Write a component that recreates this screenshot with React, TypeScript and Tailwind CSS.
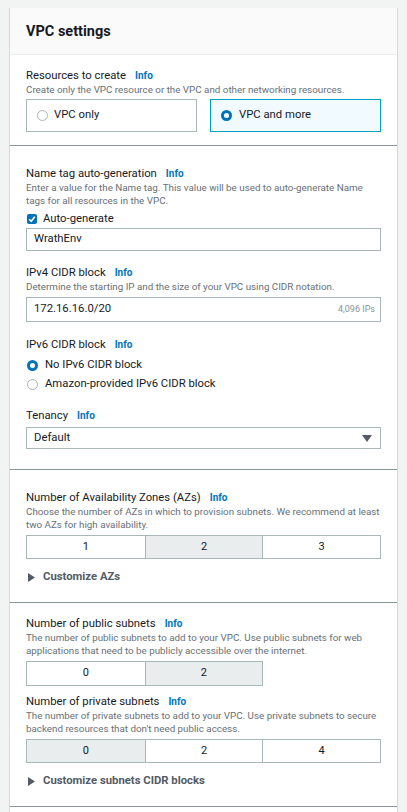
import React from "react";

const font = { fontFamily: "Roboto, 'Liberation Sans', sans-serif" };

function Label({ text, info = true }: { text: string; info?: boolean }) {
  return (
    <div className="flex items-center h-[16px] leading-[16px] pt-[1px]">
      <span className="text-[11.3px] text-[#16191f]">{text}</span>
      {info && <span className="ml-[9px] text-[10px] font-bold text-[#0073bb]">Info</span>}
    </div>
  );
}

function Desc({ children }: { children: React.ReactNode }) {
  return <p className="text-[9.8px] leading-[13px] text-[#687078]">{children}</p>;
}

function Radio({ checked }: { checked?: boolean }) {
  return checked ? (
    <span className="w-[11px] h-[11px] rounded-full bg-[#0073bb] flex items-center justify-center shrink-0">
      <span className="w-[5px] h-[5px] rounded-full bg-white" />
    </span>
  ) : (
    <span className="w-[11px] h-[11px] rounded-full border border-[#aab7b8] bg-white shrink-0" />
  );
}

function Segmented({ items, selected, cols }: { items: string[]; selected: number; cols: 2 | 3 }) {
  return (
    <div
      className={
        "grid border border-[#aab7b8] " +
        (cols === 3 ? "grid-cols-3 w-[355px]" : "grid-cols-2 w-[237px]")
      }
    >
      {items.map((it, i) => (
        <div
          key={it}
          className={
            "flex items-center justify-center text-[11px] text-[#16191f] " +
            (i > 0 ? "border-l border-[#aab7b8] " : "") +
            (i === selected ? "bg-[#eaeded]" : "bg-white")
          }
        >
          {it}
        </div>
      ))}
    </div>
  );
}

function Expand({ text }: { text: string }) {
  return (
    <div className="flex items-center h-[16px] gap-[8px] pl-[2px]">
      <svg width="7" height="9" viewBox="0 0 7 9">
        <path d="M0 0 L7 4.5 L0 9 Z" fill="#545b64" />
      </svg>
      <span className="text-[11.3px] font-bold text-[#545b64]">{text}</span>
    </div>
  );
}

export default function App() {
  return (
    <div className="min-h-screen bg-[#f2f3f3] pt-[8px] px-[9px]" style={font}>
      <div className="bg-white border-x border-[#d5dbdb]">
        {/* header */}
        <div className="h-[47px] bg-[#fafafa] border-b border-[#eaeded] px-4 pt-[2px] flex items-center">
          <h2 className="text-[14.5px] font-bold text-[#16191f]">VPC settings</h2>
        </div>

        {/* resources */}
        <div className="px-4 pt-[12px] pb-[13px] border-b border-[#879596]">
          <Label text="Resources to create" />
          <Desc>Create only the VPC resource or the VPC and other networking resources.</Desc>
          <div className="mt-[3px] grid grid-cols-2 gap-[13px]">
            <div className="h-[33px] border border-[#aab7b8] flex items-center pl-[10px] gap-[6px]">
              <Radio />
              <span className="text-[11.3px] text-[#16191f]">VPC only</span>
            </div>
            <div className="h-[33px] border border-[#00a1c9] bg-[#f1faff] flex items-center pl-[10px] gap-[7px]">
              <Radio checked />
              <span className="text-[11.3px] text-[#16191f]">VPC and more</span>
            </div>
          </div>
        </div>

        {/* name tag etc */}
        <div className="px-4 pt-[19px] pb-[20px] border-b border-[#879596]">
          <Label text="Name tag auto-generation" />
          <Desc>
            Enter a value for the Name tag. This value will be used to auto-generate Name tags for all
            resources in the VPC.
          </Desc>
          <div className="mt-[4px] h-[16px] flex items-center gap-[6px] pl-[1px]">
            <span className="w-[10px] h-[10px] rounded-[2px] bg-[#0073bb] flex items-center justify-center">
              <svg width="8" height="8" viewBox="0 0 8 8">
                <path d="M1.2 4.2 L3.2 6.2 L6.8 1.8" stroke="white" strokeWidth="1.6" fill="none" />
              </svg>
            </span>
            <span className="text-[11.3px] text-[#16191f]">Auto-generate</span>
          </div>
          <div className="mt-[1px] h-[23px] border border-[#aab7b8] flex items-center pl-[7px] text-[11.3px] text-[#16191f]">
            WrathEnv
          </div>

          <div className="mt-[13px]">
            <Label text="IPv4 CIDR block" />
            <Desc>Determine the starting IP and the size of your VPC using CIDR notation.</Desc>
            <div className="mt-[4px] h-[25px] border border-[#aab7b8] flex items-center justify-between pl-[7px] pr-[5px]">
              <span className="text-[11.3px] text-[#16191f]">172.16.16.0/20</span>
              <span className="text-[9px] text-[#879596]">4,096 IPs</span>
            </div>
          </div>

          <div className="mt-[14px]">
            <Label text="IPv6 CIDR block" />
            <div className="mt-[4px]">
              <div className="h-[19px] flex items-center gap-[7px] pl-[1px]">
                <Radio checked />
                <span className="text-[11.3px] text-[#16191f]">No IPv6 CIDR block</span>
              </div>
              <div className="h-[19px] flex items-center gap-[7px] pl-[1px]">
                <Radio />
                <span className="text-[11.3px] text-[#16191f]">Amazon-provided IPv6 CIDR block</span>
              </div>
            </div>
          </div>

          <div className="mt-[13px]">
            <Label text="Tenancy" />
            <div className="mt-[4px] h-[22px] border border-[#aab7b8] flex items-center justify-between pl-[7px] pr-[8px]">
              <span className="text-[11.3px] text-[#16191f]">Default</span>
              <svg width="10" height="7" viewBox="0 0 10 7">
                <path d="M0 0 L10 0 L5 7 Z" fill="#545b64" />
              </svg>
            </div>
          </div>
        </div>

        {/* AZs */}
        <div className="px-4 pt-[19px] pb-[17px] border-b border-[#879596]">
          <Label text="Number of Availability Zones (AZs)" />
          <Desc>
            Choose the number of AZs in which to provision subnets. We recommend at least two AZs for high
            availability.
          </Desc>
          <div className="mt-[4px] h-[24px] flex">
            <Segmented items={["1", "2", "3"]} selected={1} cols={3} />
          </div>
          <div className="mt-[10px]">
            <Expand text="Customize AZs" />
          </div>
        </div>

        {/* subnets */}
        <div className="px-4 pt-[12px] pb-[17px] border-b border-[#879596]">
          <Label text="Number of public subnets" />
          <Desc>
            The number of public subnets to add to your VPC. Use public subnets for web applications that
            need to be publicly accessible over the internet.
          </Desc>
          <div className="mt-[4px] h-[25px] flex">
            <Segmented items={["0", "2"]} selected={1} cols={2} />
          </div>

          <div className="mt-[7px]">
            <Label text="Number of private subnets" />
            <Desc>
              The number of private subnets to add to your VPC. Use private subnets to secure backend
              resources that don't need public access.
            </Desc>
            <div className="mt-[4px] h-[24px] flex">
              <Segmented items={["0", "2", "4"]} selected={0} cols={3} />
            </div>
          </div>
          <div className="mt-[10px]">
            <Expand text="Customize subnets CIDR blocks" />
          </div>
        </div>
        <div className="h-[20px]" />
      </div>
    </div>
  );
}
